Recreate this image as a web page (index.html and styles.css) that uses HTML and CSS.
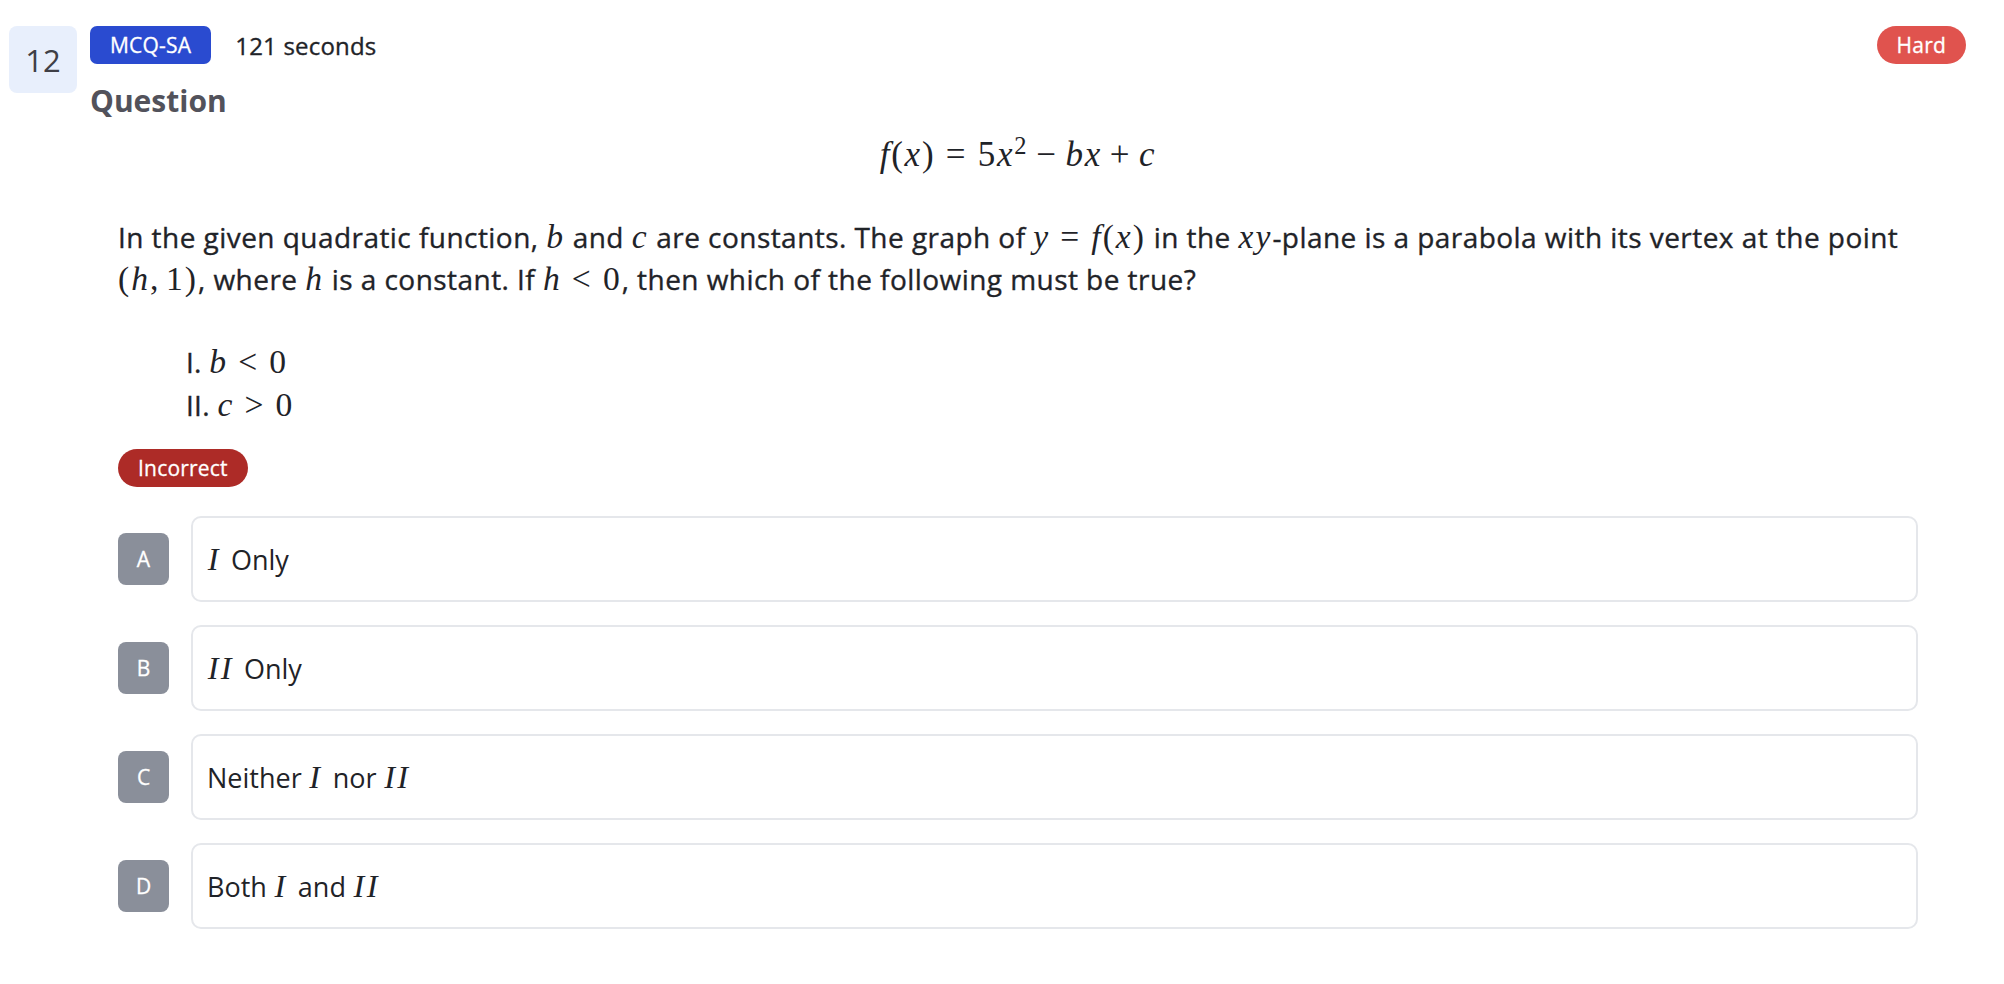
FILE: index.html
```html
<!DOCTYPE html>
<html lang="en">
<head>
<meta charset="utf-8">
<title>Question 12</title>
<link rel="stylesheet" href="styles.css">
</head>
<body>
<div class="q">
  <div class="qnum">12</div>
  <div class="qmain">
    <div class="meta">
      <span class="badge badge-type">MCQ-SA</span>
      <span class="time">121 seconds</span>
      <span class="badge badge-hard">Hard</span>
    </div>
    <h2 class="qtitle">Question</h2>
    <div class="qbody">
      <div class="display"><span class="mi">f</span>(<span class="mi">x</span>)<span class="rel">=</span>5<span class="mi">x</span><sup class="sup">2</sup><span class="bin">−</span><span class="mi">b</span><span class="mi">x</span><span class="bin">+</span><span class="mi">c</span></div>
      <p class="stem">In the given quadratic function, <span class="m"><span class="mi">b</span></span> and <span class="m"><span class="mi">c</span></span> are constants. The graph of <span class="m"><span class="mi">y</span><span class="rel">=</span><span class="mi">f</span>(<span class="mi">x</span>)</span> in the <span class="m"><span class="mi">x</span><span class="mi">y</span></span>-plane is a parabola with its vertex at the point <span class="m">(<span class="mi">h</span>,<span class="thin"></span>1)</span>, where <span class="m"><span class="mi">h</span></span> is a constant. If <span class="m"><span class="mi">h</span><span class="rel">&lt;</span>0</span>, then which of the following must be true?</p>
      <div class="roman">
        <div class="roman-item">I. <span class="m"><span class="mi">b</span><span class="rel">&lt;</span>0</span></div>
        <div class="roman-item">II. <span class="m"><span class="mi">c</span><span class="rel">&gt;</span>0</span></div>
      </div>
      <div class="result"><span class="badge badge-wrong">Incorrect</span></div>
      <div class="options">
        <div class="opt"><span class="letter">A</span><div class="card"><span class="m om"><span class="mi">I</span></span>&nbsp;Only</div></div>
        <div class="opt"><span class="letter">B</span><div class="card"><span class="m om"><span class="mi">II</span></span>&nbsp;Only</div></div>
        <div class="opt"><span class="letter">C</span><div class="card">Neither&nbsp;<span class="m om"><span class="mi">I</span></span>&nbsp;nor&nbsp;<span class="m om"><span class="mi">II</span></span></div></div>
        <div class="opt"><span class="letter">D</span><div class="card">Both&nbsp;<span class="m om"><span class="mi">I</span></span>&nbsp;and&nbsp;<span class="m om"><span class="mi">II</span></span></div></div>
      </div>
    </div>
  </div>
</div>
</body>
</html>
```

FILE: styles.css
```css
* { box-sizing: border-box; }

body {
  margin: 0;
  background: #ffffff;
  font-family: "Open Sans", "Noto Sans", sans-serif;
  color: #1f2328;
}

.q {
  display: flex;
  align-items: flex-start;
  gap: 13px;
  padding: 26px 38px 0 9px;
}

.qnum {
  flex: none;
  width: 68px;
  height: 67px;
  display: flex;
  align-items: center;
  justify-content: center;
  background: #e8effc;
  border-radius: 8px;
  font-size: 31px;
  color: #3f3f46;
}

.qmain {
  flex: 1;
  min-width: 0;
}

.meta {
  display: flex;
  align-items: center;
  gap: 24px;
  height: 38px;
}

.badge {
  display: inline-flex;
  align-items: center;
  height: 38px;
  padding: 0 20px;
  font-size: 21px;
  font-weight: 400;
  line-height: 1;
  color: #ffffff;
  letter-spacing: 0.2px;
  -webkit-text-stroke: 0.3px #ffffff;
}

.badge-type {
  background: #2a4bd0;
  border-radius: 7px;
}

.badge-hard {
  margin-left: auto;
  background: #e0534e;
  border-radius: 999px;
}

.badge-wrong {
  background: #ad2b27;
  border-radius: 999px;
}

.time {
  font-size: 24px;
  font-weight: 400;
  letter-spacing: 0.2px;
  -webkit-text-stroke: 0.35px #1f2328;
  color: #1f2328;
}

.qtitle {
  margin: 17px 0 0;
  font-size: 30px;
  line-height: 40px;
  font-weight: 700;
  color: #52525b;
}

.qbody {
  padding: 0 48px 0 28px;
}

.display {
  margin-top: 12px;
  text-align: center;
  font-family: "Liberation Serif", serif;
  font-size: 35px;
  line-height: 44px;
  letter-spacing: 0.05em;
  color: #1f2328;
}

.m {
  font-family: "Liberation Serif", serif;
  font-size: 1.2em;
  font-weight: 400;
  line-height: 1;
  white-space: nowrap;
  letter-spacing: 0.06em;
  -webkit-text-stroke: 0;
}

.mi {
  font-style: italic;
}

.rel {
  margin: 0 0.3em;
}

.bin {
  margin: 0 0.2222em;
}

.thin {
  display: inline-block;
  width: 0.1667em;
}

.sup {
  font-size: 0.7em;
  line-height: 0;
  vertical-align: 0.5em;
}

.stem {
  margin: 39px 0 0;
  font-size: 28px;
  line-height: 42px;
  font-weight: 400;
  letter-spacing: 0.45px;
  -webkit-text-stroke: 0.35px #1f2328;
  color: #1f2328;
}

.roman {
  margin: 41px 0 0 68px;
  font-size: 28px;
  line-height: 43px;
  font-weight: 400;
  letter-spacing: 0.3px;
  -webkit-text-stroke: 0.35px #1f2328;
}

.result {
  margin-top: 22px;
}

.options {
  margin-top: 29px;
  display: flex;
  flex-direction: column;
  gap: 23px;
}

.opt {
  display: flex;
  align-items: center;
  gap: 22px;
}

.letter {
  flex: none;
  width: 51px;
  height: 52px;
  display: flex;
  align-items: center;
  justify-content: center;
  background: #8a8f9a;
  border-radius: 8px;
  color: #ffffff;
  font-size: 21px;
  -webkit-text-stroke: 0.3px #ffffff;
}

.card {
  flex: 1;
  height: 86px;
  display: flex;
  align-items: center;
  padding: 0 14px;
  border: 2px solid #e5e7eb;
  border-radius: 10px;
  font-size: 27px;
  color: #1f2328;
}

.om {
  font-size: 1.2em;
  letter-spacing: 0.07em;
  padding: 0 0.1em 0 0.02em;
}
```
